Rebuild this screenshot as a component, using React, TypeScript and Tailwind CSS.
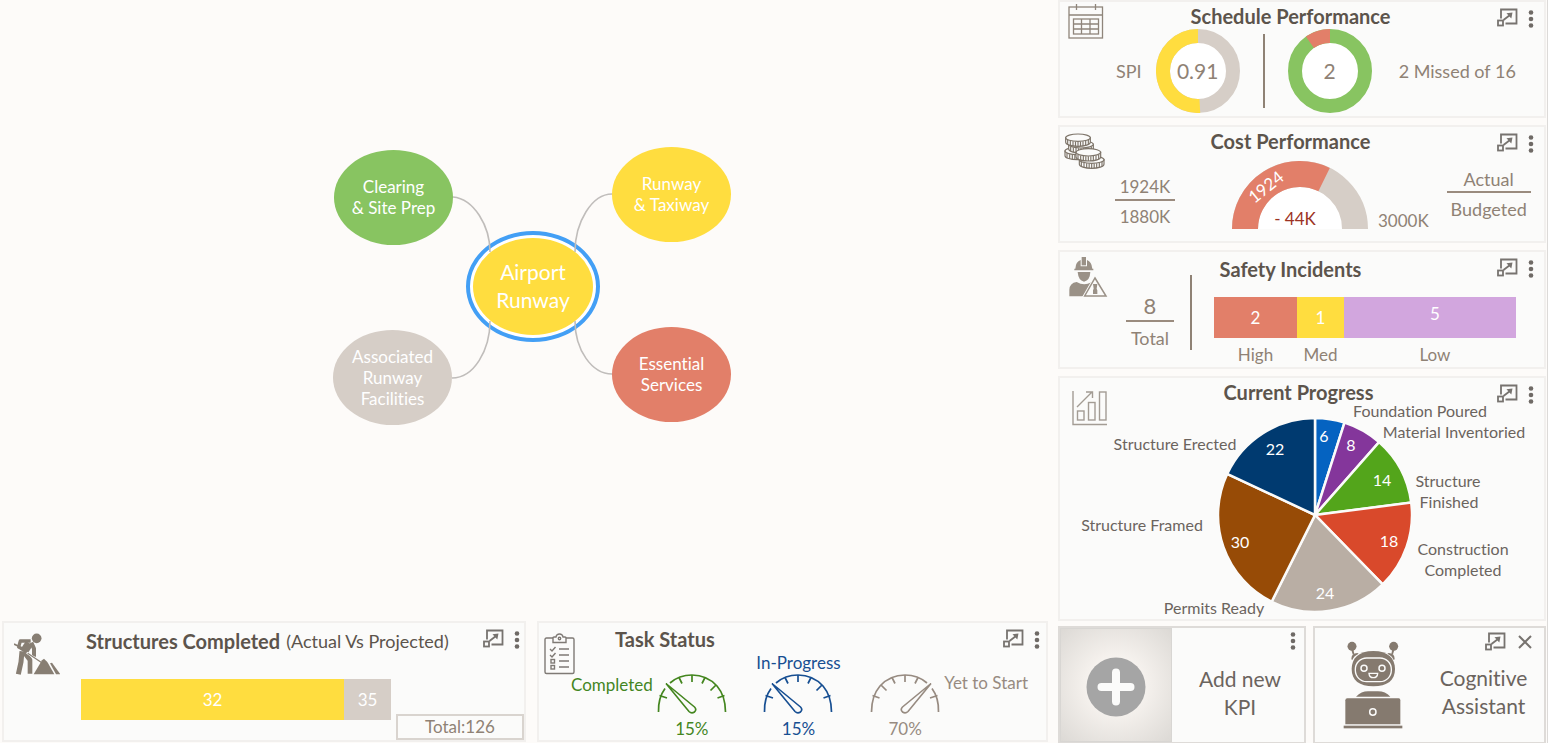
import type { ReactNode } from "react";

function ExpandIcon() {
  return (
    <svg width="21" height="19" viewBox="0 0 21 19" fill="none" stroke="#77736f" strokeWidth="1.8">
      <path d="M4 10.500V1.500H19.500V15.500H8.500" />
      <rect x="1" y="12.500" width="5" height="5" />
      <path d="M6.500 12L13 7" strokeWidth="1.800" />
      <path d="M15.500 4.500L14.300 10.500L9.500 5.200Z" fill="#77736f" stroke="none" />
    </svg>
  );
}

function KebabIcon() {
  return (
    <svg width="6" height="18" viewBox="0 0 6 18" fill="#6f6a66">
      <circle cx="3" cy="2.500" r="2.300" />
      <circle cx="3" cy="9" r="2.300" />
      <circle cx="3" cy="15.500" r="2.300" />
    </svg>
  );
}

function CloseIcon() {
  return (
    <svg width="14" height="14" viewBox="0 0 14 14" stroke="#77736f" strokeWidth="2" fill="none">
      <path d="M1 1L13 13M13 1L1 13" />
    </svg>
  );
}

function CalendarIcon() {
  return (
    <svg width="36" height="36" viewBox="0 0 36 36" fill="none" stroke="#8f857b" strokeWidth="1.300">
      <rect x="1" y="4" width="33.500" height="31" />
      <path d="M1 12H34.500M8.500 1V7M27.500 1V7" />
      <rect x="5.500" y="16" width="25" height="15" />
      <path d="M5.500 21H30.500M5.500 26H30.500M13.500 16V31M22 16V31" />
    </svg>
  );
}

function Coin({ x, y }: { x: number; y: number }) {
  const ticks = [-31, -23, -15, -7.5, 0, 7.5, 15, 23, 31];
  return (
    <g>
      <path d={`M${x - 37} ${y}v14a37 12 0 0 0 74 0v-14z`} />
      {ticks.map((t) => {
        const drop = 12 * Math.sqrt(1 - (t / 37) ** 2);
        return <path key={t} d={`M${x + t} ${y + drop}v14`} />;
      })}
      <ellipse cx={x} cy={y} rx="37" ry="11" />
    </g>
  );
}

function CoinsIcon() {
  return (
    <svg width="42" height="36" viewBox="24 36 126 108" fill="#fbfbfa" stroke="#7d7469" strokeWidth="3.500">
      <Coin x={64} y={90} />
      <Coin x={75} y={70} />
      <Coin x={66} y={50} />
      <Coin x={107} y={116} />
      <Coin x={97} y={94} />
    </svg>
  );
}

function HelmetIcon() {
  return (
    <svg width="40" height="42" viewBox="38 17 120 126" fill="#9a9187">
      <path d="M60 55Q61 34 76 29V48H95V29Q109 34 111 55H114V60H57V55Z" />
      <path d="M79 20H92V45H79Z" />
      <path d="M67 65H105Q104 90 86 94Q69 90 67 65Z" />
      <path d="M42 138V118Q43 98 64 95Q86 108 108 96L84 138Z" />
      <path d="M119 81L154 138H86Z" fill="#fbfbfa" stroke="#fbfbfa" strokeWidth="8" />
      <path d="M119 83L152 137H88Z" fill="#fbfbfa" stroke="#9a9187" strokeWidth="4.500" />
      <path d="M113 101H126L124 115L126 120V131H113V120L115 115Z" />
    </svg>
  );
}

function TrendIcon() {
  return (
    <svg width="36" height="36" viewBox="0 0 36 36" fill="none" stroke="#a39c94" strokeWidth="1.400">
      <path d="M1 1V34.500H35" />
      <rect x="5.500" y="21" width="6.500" height="9" />
      <rect x="16.500" y="12.500" width="6.500" height="17.500" />
      <rect x="27.500" y="2" width="6.500" height="28" />
      <path d="M5 17L19.500 2.500M14 2H20.500V8" />
    </svg>
  );
}

function DiggerIcon() {
  return (
    <svg width="46" height="42" viewBox="38 33 138 126" fill="none" stroke="#877e73" strokeLinejoin="round">
      <circle cx="106" cy="49" r="14.500" fill="#877e73" stroke="none" />
      <path d="M84 64L67 90" strokeWidth="25" />
      <path d="M88 57H57L52 75L62 80" strokeWidth="10" />
      <path d="M38 66L50 72" strokeWidth="5" />
      <path d="M90 62L98 80V104" strokeWidth="12" />
      <path d="M62 88L59 120L51 157" strokeWidth="15" />
      <path d="M68 90L86 114V155" strokeWidth="14" />
      <path d="M76 92L126 125" stroke="#fbfbfa" strokeWidth="6" />
      <path d="M79 94L126 125" strokeWidth="3.500" />
      <path d="M97 157L122 115L128 110L138 120L159 157Z" fill="#877e73" stroke="none" />
      <path d="M146 124L152 122L177 157H164Z" fill="#877e73" stroke="none" />
    </svg>
  );
}

function ClipboardIcon() {
  return (
    <svg width="31" height="42" viewBox="0 0 31 42" fill="none" stroke="#7f7a75" strokeWidth="1.400">
      <path d="M9 5H2.500Q1 5 1 6.500V39Q1 40.500 2.500 40.500H28.500Q30 40.500 30 39V6.500Q30 5 28.500 5H22" />
      <path d="M9 9.500V5Q9 4 10 4H12Q12.500 1 15.500 1Q18.500 1 19 4H21Q22 4 22 5V9.500Z" />
      <circle cx="15.500" cy="5.500" r="1.200" />
      <path d="M15 16H25M15 22H25M15 28H25M15 34H25" />
      <path d="M6 16L8 18L11.500 14M6 22L8 24L11.500 20" />
      <rect x="7" y="26.500" width="3.500" height="3.500" />
      <rect x="7" y="32.500" width="3.500" height="3.500" />
    </svg>
  );
}

function RobotIcon() {
  return (
    <svg width="60" height="88" viewBox="55 32 180 264" fill="#857a6f">
      <circle cx="82" cy="48" r="13.500" />
      <circle cx="207" cy="48" r="13.500" />
      <path d="M79 56L86 56L89 72L84 72ZM210 56L203 56L200 72L205 72Z" />
      <path d="M80 87Q80 68 98 68L102 70Q88 76 83 89ZM210 87Q210 68 192 68L188 70Q202 76 207 89Z" />
      <path d="M146 62C190 62 211 84 211 116C211 150 188 168 146 168C104 168 81 150 81 116C81 84 102 62 146 62Z" />
      <rect x="92" y="83" width="108" height="71" rx="34" fill="none" stroke="#fbfbfa" strokeWidth="4" />
      <circle cx="118" cy="114" r="9" fill="none" stroke="#fbfbfa" strokeWidth="4.500" />
      <circle cx="172" cy="114" r="9" fill="none" stroke="#fbfbfa" strokeWidth="4.500" />
      <path d="M133 129H159Q158 142 146 142Q134 142 133 129Z" fill="none" stroke="#fbfbfa" strokeWidth="4" />
      <path d="M94 199Q110 183 130 183H160Q182 183 197 199Z" />
      <path d="M68 204H222Q227 204 227 210V282H62V210Q62 204 68 204Z" />
      <circle cx="144.500" cy="245" r="9.500" fill="none" stroke="#fbfbfa" strokeWidth="4.500" />
      <rect x="57" y="286" width="176" height="8" />
    </svg>
  );
}

const ICON_BUTTON = "flex cursor-pointer items-center justify-center";

function CardActions({ title }: { title: string }) {
  return (
    <div className="flex items-start gap-2.5 pt-1.5">
      <button type="button" aria-label={`Expand ${title}`} className={ICON_BUTTON}>
        <ExpandIcon />
      </button>
      <button type="button" aria-label={`${title} menu`} className={`${ICON_BUTTON} pt-0.5`}>
        <KebabIcon />
      </button>
    </div>
  );
}

type CardProps = {
  title: string;
  note?: string;
  icon: ReactNode;
  children: ReactNode;
  className?: string;
  iconClass?: string;
  titleClass?: string;
  headerClass?: string;
};

/* Header and body share one grid cell so that charts may rise beside the title. */
function Card({
  title,
  note,
  icon,
  children,
  className = "",
  iconClass = "",
  titleClass = "justify-center pt-1 pr-7",
  headerClass = "pr-2.5",
}: CardProps) {
  return (
    <section className={`grid grid-cols-1 border-2 border-[#f2f0ee] bg-[#fbfbfa] ${className}`}>
      <div className="col-start-1 row-start-1 min-w-0">{children}</div>
      <header className={`col-start-1 row-start-1 flex h-[34px] items-start pl-1 ${headerClass}`}>
        <div className={`w-12 shrink-0 ${iconClass}`}>{icon}</div>
        <h2 className={`flex flex-1 gap-1.5 text-[20px] leading-5 font-bold whitespace-nowrap text-[#5c544c] ${titleClass}`}>
          {title}
          {note && <span className="text-[18px] font-normal">{note}</span>}
        </h2>
        <CardActions title={title} />
      </header>
    </section>
  );
}

function arc(cx: number, cy: number, r: number, from: number, to: number) {
  const point = (deg: number) => {
    const a = ((deg - 90) * Math.PI) / 180;
    return `${(cx + r * Math.cos(a)).toFixed(2)} ${(cy + r * Math.sin(a)).toFixed(2)}`;
  };
  return `M${point(from)}A${r} ${r} 0 ${to - from > 180 ? 1 : 0} 1 ${point(to)}`;
}

function Donut({ label, base, accent, from, to }: { label: string; base: string; accent: string; from: number; to: number }) {
  return (
    <div className="grid size-[84px] shrink-0 place-items-center">
      <svg className="col-start-1 row-start-1" width="84" height="84" viewBox="0 0 84 84" fill="none" strokeWidth="14">
        <circle cx="42" cy="42" r="35" fill="#ffffff" stroke={base} />
        <path d={arc(42, 42, 35, from, to)} stroke={accent} />
      </svg>
      <span className="col-start-1 row-start-1 text-[21px] leading-6">{label}</span>
    </div>
  );
}

function Fraction({ top, bottom, className }: { top: string; bottom: string; className: string }) {
  return (
    <div className={`shrink-0 text-center ${className}`}>
      <div className="border-b-2 border-[#9a8b7e]">{top}</div>
      <div className="pt-1">{bottom}</div>
    </div>
  );
}

function CostGauge() {
  return (
    <svg className="shrink-0" width="136" height="70" viewBox="0 0 136 70" fontFamily="Lato, sans-serif" textAnchor="middle">
      <path d={arc(68, 70, 55, -90, 90)} fill="#ffffff" stroke="#d6cec7" strokeWidth="26" />
      <path d={arc(68, 70, 55, -90, 26)} fill="none" stroke="#e27f69" strokeWidth="26" />
      <text x="34" y="34" fontSize="17" fill="#ffffff" transform="rotate(-39 34 28)">1924</text>
      <text x="63" y="66" fontSize="17" fill="#9c3324">- 44K</text>
    </svg>
  );
}

const slices = [
  { value: 6, color: "#0563c1", x: 266, y: 66 },
  { value: 8, color: "#84369b", x: 293, y: 75 },
  { value: 14, color: "#53a51b", x: 324, y: 110 },
  { value: 18, color: "#d9492b", x: 331, y: 171 },
  { value: 24, color: "#b9aea4", x: 267, y: 223 },
  { value: 30, color: "#974b06", x: 182, y: 172 },
  { value: 22, color: "#003a70", x: 217, y: 79 },
];

const pieLabels = [
  { text: "Foundation Poured", x: 362, y: 41 },
  { text: "Material Inventoried", x: 396, y: 62 },
  { text: "Structure", x: 390, y: 111 },
  { text: "Finished", x: 391, y: 132 },
  { text: "Construction", x: 405, y: 179 },
  { text: "Completed", x: 405, y: 200 },
  { text: "Permits Ready", x: 156, y: 238 },
  { text: "Structure Framed", x: 84, y: 155 },
  { text: "Structure Erected", x: 117, y: 74 },
];

function ProgressPie() {
  const total = slices.reduce((sum, s) => sum + s.value, 0);
  let start = 0;
  return (
    <svg className="mx-auto" width="485" height="241" viewBox="2 2 485 241" fontFamily="Lato, sans-serif" textAnchor="middle" fontSize="16">
      {slices.map((s) => {
        const from = start;
        start += (s.value / total) * 360;
        return (
          <path
            key={s.value}
            d={`${arc(257, 139, 97, from, start)}L257 139Z`}
            fill={s.color}
            stroke="#fbfbfa"
            strokeWidth="2.500"
          />
        );
      })}
      {slices.map((s) => (
        <text key={s.value} x={s.x} y={s.y} fill="#ffffff">{s.value}</text>
      ))}
      {pieLabels.map((l) => (
        <text key={l.text} x={l.x} y={l.y} fill="#6b645e">{l.text}</text>
      ))}
    </svg>
  );
}

function TaskGauge({ color, flipped = false }: { color: string; flipped?: boolean }) {
  return (
    <svg width="70" height="41" viewBox="0 0 70 41" fill="none" stroke={color} strokeWidth="1.700">
      <g transform={flipped ? "translate(70 0) scale(-1 1)" : undefined}>
        <path d="M1.500 39Q1 25 8 15.500M13 10Q22 2 35 2Q50 2 60 13Q68.500 23 68.500 39" />
        <path d="M2.500 22.500L10 25M35 2V9M22 4.500L25 10.500M48 4.500L45 10.500M59 12L53.500 17.500M67.500 22.500L60.500 25" />
        <path d="M9 10.500L37.500 34Q40 36.500 37.500 39Q34.500 41 32 38.500L9 10.500Z" strokeWidth="1.600" />
      </g>
    </svg>
  );
}

function Meter({ color, percent, flipped }: { color: string; percent: string; flipped?: boolean }) {
  return (
    <div className="flex flex-col items-center gap-[5px]">
      <TaskGauge color={color} flipped={flipped} />
      <span className="leading-5">{percent}</span>
    </div>
  );
}

const nodes = [
  { lines: ["Clearing", "& Site Prep"], style: "left-[2px] top-[4px] bg-[#88c461]" },
  { lines: ["Runway", "& Taxiway"], style: "left-[280px] top-[1px] bg-[#ffdd3f]" },
  { lines: ["Associated", "Runway", "Facilities"], style: "left-[1px] top-[184px] bg-[#d6cec7]" },
  { lines: ["Essential", "Services"], style: "left-[280px] top-[181px] bg-[#e27f69]" },
];

function ProjectMap() {
  return (
    <main className="flex flex-1 items-center justify-center pb-[50px] pl-2">
      <div className="relative h-[280px] w-[400px]">
        {nodes.map((n) => (
          <button
            key={n.lines[0]}
            type="button"
            className={`absolute flex h-[95px] w-[119px] cursor-pointer flex-col items-center justify-center rounded-[50%] text-[17px] leading-[21px] text-white ${n.style}`}
          >
            {n.lines.map((line) => (
              <span key={line}>{line}</span>
            ))}
          </button>
        ))}
        <button
          type="button"
          className="absolute top-[85px] left-[134px] h-[111px] w-[134px] cursor-pointer rounded-[50%] border-4 border-[#439ff5] bg-white p-[3px] text-[21px] leading-7 text-white"
        >
          <span className="flex h-full flex-col items-center justify-center rounded-[50%] bg-[#ffdd3f]">
            <span>Airport</span>
            <span>Runway</span>
          </span>
        </button>
        <svg className="pointer-events-none absolute inset-0" width="400" height="280" fill="none" stroke="#c0bdbb" strokeWidth="1.600">
          <path d="M121 51C142 53 158 80 158 106" />
          <path d="M280 48C260 48 243 76 243 106" />
          <path d="M120 232C142 232 158 204 158 175" />
          <path d="M280 228C260 228 243 204 243 175" />
        </svg>
      </div>
    </main>
  );
}

export default function App() {
  return (
    <div className="flex min-h-screen bg-[#fdfbf9] font-['Lato',sans-serif] text-[17px] leading-6 text-[#8f8275] [font-variant-ligatures:none]">
      <div className="flex min-w-0 flex-1 flex-col border-b border-[#dcdad8]">
        <ProjectMap />
        <div className="flex gap-[11px] pr-2 pb-px pl-0.5">
          <Card
            title="Structures Completed"
            note="(Actual Vs Projected)"
            icon={<DiggerIcon />}
            className="min-h-[119px] flex-1"
            iconClass="pt-2.5 pl-1.5"
            titleClass="pt-2 pl-[30px]"
            headerClass="pr-1"
          >
            <div className="flex h-full items-end justify-between pt-14 pl-[77px]">
              <div className="mb-5 flex h-[41px] w-[310px] text-white">
                <div className="flex flex-1 items-center justify-center bg-[#ffdd3f]">32</div>
                <div className="flex w-[47px] items-center justify-center bg-[#d6cec7]">35</div>
              </div>
              <div className="w-32 border-2 border-[#d9d4cf] text-center leading-[22px]">Total:126</div>
            </div>
          </Card>
          <Card
            title="Task Status"
            icon={<ClipboardIcon />}
            className="min-h-[119px] w-[511px] shrink-0"
            iconClass="pt-2.5 pl-px"
            titleClass="pt-1.5 pl-6"
            headerClass="pr-1.5"
          >
            <div className="flex items-end justify-between pt-[30px] pr-[18px] pl-8 leading-5">
              <div className="flex gap-1 text-[#44861f]">
                <span className="pt-0.5">Completed</span>
                <Meter color="#44861f" percent="15%" />
              </div>
              <div className="flex flex-col items-center text-[#174f92]">
                <span>In-Progress</span>
                <Meter color="#174f92" percent="15%" />
              </div>
              <div className="flex gap-1 text-[#978b81]">
                <Meter color="#978b81" percent="70%" flipped />
                <span>Yet to Start</span>
              </div>
            </div>
          </Card>
        </div>
      </div>

      <aside className="flex w-[492px] shrink-0 flex-col gap-[7px] border-r border-[#dcdad8] pr-px pl-0.5">
        <Card
          title="Schedule Performance"
          icon={<CalendarIcon />}
          className="min-h-[118px]"
          iconClass="pt-px pl-1"
        >
          <div className="flex items-center gap-[23px] pt-[27px] pl-14 text-[18px]">
            <div className="flex items-center gap-3.5">
              <span>SPI</span>
              <Donut label="0.91" base="#d6cec7" accent="#ffdd3f" from={177} to={360} />
            </div>
            <div className="h-[74px] w-0.5 bg-[#8f8275]" />
            <Donut label="2" base="#88c461" accent="#e27f69" from={325} to={360} />
            <span className="pl-1">2 Missed of 16</span>
          </div>
        </Card>

        <Card title="Cost Performance" icon={<CoinsIcon />} className="min-h-[118px]" iconClass="pt-1.5">
          <div className="flex items-end pt-8 pl-[55px]">
            <Fraction top="1924K" bottom="1880K" className="w-[60px]" />
            <div className="ml-[57px] flex items-end gap-2.5">
              <CostGauge />
              <span className="-mb-1">3000K</span>
            </div>
            <Fraction top="Actual" bottom="Budgeted" className="mb-2 ml-[18px] w-[84px] text-[18px]" />
          </div>
        </Card>

        <Card
          title="Safety Incidents"
          icon={<HelmetIcon />}
          className="min-h-[118px]"
          iconClass="pt-1 pl-1"
          titleClass="justify-center pt-[7px] pr-7"
        >
          <div className="flex items-start pt-[23px] pl-[66px]">
            <div className="w-12 pt-[17px] text-center text-[18px]">
              <div className="border-b-2 border-[#9a8b7e] text-[22px] leading-7">8</div>
              <div className="pt-1">Total</div>
            </div>
            <div className="ml-4 h-[75px] w-0.5 shrink-0 bg-[#8f8275]" />
            <div className="mt-[22px] ml-[22px] grid w-[302px] grid-cols-[83fr_47fr_172fr] text-center">
              <div className="bg-[#e27f69] leading-[41px] text-white">2</div>
              <div className="bg-[#ffdd3f] leading-[41px] text-white">1</div>
              <div className="bg-[#d2a6de] pl-2.5 leading-[34px] text-white">5</div>
              <div className="pt-[5px]">High</div>
              <div className="pt-[5px]">Med</div>
              <div className="pt-[5px] pl-2.5">Low</div>
            </div>
          </div>
        </Card>

        <Card
          title="Current Progress"
          icon={<TrendIcon />}
          className="min-h-[245px]"
          iconClass="pt-3 pl-2"
          titleClass="justify-center pt-1 pr-3"
        >
          <ProgressPie />
        </Card>

        <div className="-mt-0.5 flex flex-1 gap-[7px]">
          <section className="flex min-h-[118px] flex-1 border-2 border-[#dedbd8] bg-[#fbfbfa]">
            <button
              type="button"
              aria-label="Add KPI"
              className="flex w-[112px] shrink-0 cursor-pointer items-center justify-center border border-[#d8d6d3] bg-[radial-gradient(circle,#faf6f2_25%,#dcd9d5_100%)] pt-1"
            >
              <svg width="60" height="60" viewBox="0 0 60 60">
                <circle cx="30" cy="30" r="29.500" fill="#a5a5a5" />
                <path d="M30 15.500V44.500M15.500 30H44.500" stroke="#fbfbfa" strokeWidth="8" strokeLinecap="round" />
              </svg>
            </button>
            <div className="flex flex-1 flex-col">
              <div className="flex justify-end pt-1 pr-2">
                <button type="button" aria-label="KPI menu" className={ICON_BUTTON}>
                  <KebabIcon />
                </button>
              </div>
              <p className="pt-[15px] pl-1 text-center text-[21px] leading-7 text-[#6b645e]">
                Add new
                <br />
                KPI
              </p>
            </div>
          </section>
          <section className="flex min-h-[118px] w-[233px] shrink-0 border-2 border-[#dedbd8] bg-[#fbfbfa]">
            <div className="flex w-[116px] items-center justify-center">
              <RobotIcon />
            </div>
            <div className="flex flex-1 flex-col">
              <div className="flex items-center justify-end gap-3 pt-1 pr-3">
                <button type="button" aria-label="Expand assistant" className={ICON_BUTTON}>
                  <ExpandIcon />
                </button>
                <button type="button" aria-label="Close assistant" className={ICON_BUTTON}>
                  <CloseIcon />
                </button>
              </div>
              <p className="pt-[13px] pr-2 text-center text-[21px] leading-7 text-[#6b645e]">
                Cognitive
                <br />
                Assistant
              </p>
            </div>
          </section>
        </div>
      </aside>
    </div>
  );
}
